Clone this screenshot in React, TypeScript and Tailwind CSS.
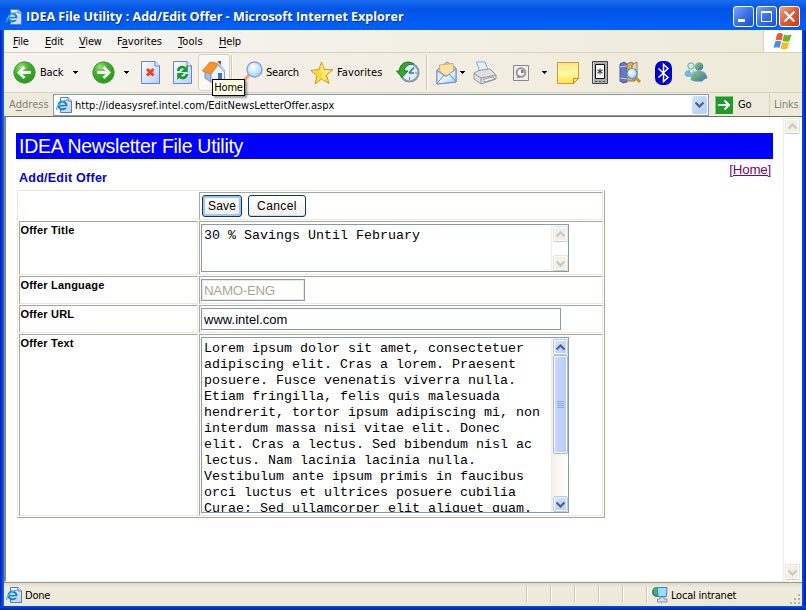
import type { ReactNode } from "react";

const offerText = `Lorem ipsum dolor sit amet, consectetuer
adipiscing elit. Cras a lorem. Praesent
posuere. Fusce venenatis viverra nulla.
Etiam fringilla, felis quis malesuada
hendrerit, tortor ipsum adipiscing mi, non
interdum massa nisi vitae elit. Donec
elit. Cras a lectus. Sed bibendum nisl ac
lectus. Nam lacinia lacinia nulla.
Vestibulum ante ipsum primis in faucibus
orci luctus et ultrices posuere cubilia
Curae; Sed ullamcorper elit aliquet quam.`;

function Gradients() {
  return (
    <svg className="absolute h-0 w-0" aria-hidden="true">
      <defs>
        <linearGradient id="page" x1="0" y1="0" x2="1" y2="1">
          <stop offset="0" stopColor="#fff" />
          <stop offset="1" stopColor="#b4cef8" />
        </linearGradient>
        <radialGradient id="green" cx=".35" cy=".25" r=".8">
          <stop offset="0" stopColor="#9be07c" />
          <stop offset=".45" stopColor="#3fae2a" />
          <stop offset="1" stopColor="#2a961c" />
        </radialGradient>
        <linearGradient id="note" x1="0" y1="0" x2="0" y2="1">
          <stop offset="0" stopColor="#ffe680" />
          <stop offset=".5" stopColor="#fff8a8" />
          <stop offset="1" stopColor="#ffe14d" />
        </linearGradient>
        <radialGradient id="lens" cx=".4" cy=".35" r=".7">
          <stop offset="0" stopColor="#fff" />
          <stop offset="1" stopColor="#9fd0fb" />
        </radialGradient>
        <linearGradient id="person" x1="0" y1="0" x2="1" y2="1">
          <stop offset="0" stopColor="#8fd08a" />
          <stop offset=".5" stopColor="#5fa08c" />
          <stop offset="1" stopColor="#4468c0" />
        </linearGradient>
        <linearGradient id="envelope" x1="0" y1="0" x2="1" y2="1">
          <stop offset="0" stopColor="#c9e6ff" />
          <stop offset=".5" stopColor="#e9f7ff" />
          <stop offset="1" stopColor="#8cc8f8" />
        </linearGradient>
      </defs>
    </svg>
  );
}

function IePage({ className = "" }: { className?: string }) {
  return (
    <svg width="16" height="16" viewBox="0 0 16 16" className={`shrink-0 ${className}`}>
      <path d="M4.500 .5H12L15.500 4V15.500H4.500Z" fill="url(#page)" stroke="#5d79b8" />
      <path d="M12 .5V4H15.500" fill="#dbe8ff" stroke="#5d79b8" />
      <circle cx="6.500" cy="8.500" r="3.900" fill="#c8ecff" stroke="#1b7fd6" strokeWidth="2.200" />
      <path d="M4 8.700H10.500" stroke="#1b7fd6" strokeWidth="1.700" />
      <path d="M8 10H12" stroke="#dbe8ff" strokeWidth="1.300" />
      <path d="M1 13C-.5 11 4 4 11.500 3" fill="none" stroke="#4fb2f0" strokeWidth="1.200" />
    </svg>
  );
}

function Chevron({ up = false, color }: { up?: boolean; color: string }) {
  return (
    <svg width="9" height="7" viewBox="0 0 9 7">
      <path d={up ? "M.5 5.500L4.500 1.500L8.500 5.500" : "M.5 1.500L4.500 5.500L8.500 1.500"} fill="none" stroke={color} strokeWidth="2.200" />
    </svg>
  );
}

function ScrollButton({ up = false, disabled = false }: { up?: boolean; disabled?: boolean }) {
  return (
    <div
      className={`flex h-[16px] w-[15px] shrink-0 items-center justify-center rounded-[2px] border shadow-[inset_0_0_0_1px_white] ${
        disabled ? "border-[#e6e4d8] border-b-[#cfccb8] bg-[#f0efe8]" : "border-[#b4c8f0] bg-linear-to-br from-[#d6e2ff] to-[#b5cbfb]"
      }`}
    >
      <Chevron up={up} color={disabled ? "#c9c7ba" : "#4d6185"} />
    </div>
  );
}

function DropArrow({ className = "" }: { className?: string }) {
  return (
    <svg width="5" height="3" viewBox="0 0 5 3" className={`shrink-0 ${className}`} shapeRendering="crispEdges">
      <path d="M0 0H5L2.500 3Z" fill="#000" />
    </svg>
  );
}

function Separator({ className = "" }: { className?: string }) {
  return <div className={`h-[35px] w-[2px] shrink-0 border-r border-l border-r-[#faf8f2] border-l-[#d2cdb6] ${className}`} />;
}

function RoundArrow({ back = false }: { back?: boolean }) {
  return (
    <svg width="23" height="23" viewBox="0 0 23 23" className="shrink-0">
      <circle cx="11.500" cy="11.500" r="10.700" fill="url(#green)" stroke="#4a9c3a" />
      <path
        d={back ? "M18 11.500H7M11.500 6L6 11.500L11.500 17" : "M5 11.500H16M11.500 6L17 11.500L11.500 17"}
        fill="none"
        stroke="#fff"
        strokeWidth="2.800"
      />
    </svg>
  );
}

function CaptionButton({ close = false, children }: { close?: boolean; children: ReactNode }) {
  return (
    <div
      className={`flex h-[21px] w-[21px] items-center justify-center rounded-[3px] border border-white ${
        close ? "bg-linear-to-br from-[#f0a080] via-[#e35a32] to-[#c83a10]" : "bg-linear-to-br from-[#7ba4f8] via-[#3a70ea] to-[#1c4fd0]"
      }`}
    >
      <svg width="19" height="19" viewBox="0 0 19 19">
        {children}
      </svg>
    </div>
  );
}

function TitleBar() {
  return (
    <header className="flex h-[30px] items-center bg-linear-to-b from-[#1a6df0] via-[#0054e3] via-30% to-[#0061fc] pt-[3px] pr-[6px] pl-[6px]">
      <IePage />
      <h1 className="ml-[4px] w-[400px] pt-px text-[12.500px] font-bold tracking-[0.010px] whitespace-nowrap text-white [font-family:'Open_Sans','Noto_Sans',sans-serif] [text-shadow:1px_1px_#0a318f]">
        IDEA File Utility : Add/Edit Offer - Microsoft Internet Explorer
      </h1>
      <div className="ml-auto flex gap-[2px]">
        <CaptionButton>
          <path d="M4 13.500H11" stroke="#fff" strokeWidth="3" />
        </CaptionButton>
        <CaptionButton>
          <path d="M4.500 4.500H14.500V14.500H4.500ZM4 5.500H15" fill="none" stroke="#fff" />
        </CaptionButton>
        <CaptionButton close>
          <path d="M4.500 4.500L14.500 14.500M14.500 4.500L4.500 14.500" stroke="#fff" strokeWidth="2.200" />
        </CaptionButton>
      </div>
    </header>
  );
}

function MenuItem({ before = "", letter, after, className }: { before?: string; letter: string; after: string; className: string }) {
  return (
    <span className={`pt-px whitespace-nowrap ${className}`}>
      {before}
      <span className="underline underline-offset-2">{letter}</span>
      {after}
    </span>
  );
}

function MenuBar() {
  return (
    <nav className="flex h-[23px] items-center border-b border-[#d8d2bd] bg-linear-to-r from-[#f7f5f2] to-[#eeead9] pl-[9px]">
      <MenuItem letter="F" after="ile" className="w-[32px]" />
      <MenuItem letter="E" after="dit" className="w-[34px]" />
      <MenuItem letter="V" after="iew" className="w-[38px]" />
      <MenuItem before="F" letter="a" after="vorites" className="w-[61px] tracking-[0.050px]" />
      <MenuItem letter="T" after="ools" className="w-[41px] tracking-[0.100px]" />
      <MenuItem letter="H" after="elp" className="w-[30px]" />
      <div className="ml-auto flex h-[22px] w-[39px] items-center justify-center border-l border-[#d8d2bd] bg-white">
        <svg width="20" height="19" viewBox="0 0 20 19">
          <path d="M4 2Q7 0 10 2L8.500 8.500Q5.500 7 2.500 8.500Z" fill="#ee5a2a" />
          <path d="M11 2.500Q14 4 18.500 2.500L16.500 9Q13 10.500 9.500 9Z" fill="#6fb52c" />
          <path d="M2.200 9.500Q5.500 8 8.200 9.500L6.500 16Q4 14.500.5 16Z" fill="#4a8de0" />
          <path d="M9.200 10Q12.500 11.500 16.200 10L14.500 16.500Q11 18.500 7.500 16.500Z" fill="#f5bd1f" />
        </svg>
      </div>
    </nav>
  );
}

function PageIcon({ children, className = "" }: { children: ReactNode; className?: string }) {
  return (
    <svg width="19" height="23" viewBox="0 0 19 23" className={`shrink-0 ${className}`}>
      <path d="M.5 .5H14L18.500 5V22.500H.5Z" fill="url(#page)" stroke="#6a84bd" />
      <path d="M14 .5V5H18.500" fill="#dce8ff" stroke="#6a84bd" />
      {children}
    </svg>
  );
}

function ToolBar() {
  return (
    <div className="flex h-[40px] items-center border-b border-[#d8d2bd] bg-linear-to-r from-[#f6f2ee] to-[#eeead8] pl-[9px]">
      <RoundArrow back />
      <span className="ml-[4px] w-[33px] pt-px">Back</span>
      <DropArrow className="mr-[14px]" />
      <RoundArrow />
      <DropArrow className="mr-[12px] ml-[9px]" />
      <PageIcon>
        <path d="M6 8L12.500 14.500M12.500 8L6 14.500" stroke="#f0401c" strokeWidth="3" />
      </PageIcon>
      <PageIcon className="ml-[13px]">
        <path d="M5 10C6 5.500 10.500 5 12 7.500M14 13C13 17.500 8.500 18 7 15.500" fill="none" stroke="#1b9a2a" strokeWidth="2.600" />
        <path d="M14.800 4V11H8ZM4.200 19V12H11Z" fill="#1b9a2a" />
      </PageIcon>
      <div className="relative ml-[6px] flex h-[37px] w-[32px] shrink-0 items-center justify-center rounded-[3px] border border-[#d5d2c4] bg-[#f9f8f4] pb-[2px]">
        <svg width="24" height="24" viewBox="0 0 24 24">
          <path d="M16 1H19V8H16Z" fill="#a63a2a" />
          <path d="M3 11L9 14V22L3 18Z" fill="#9fc0ea" stroke="#6d8fc4" />
          <path d="M9 14L16 5L22.500 12V19L9 23Z" fill="#f0f5ff" stroke="#7fa0d4" />
          <path d="M16 13H20V20L16 21.500Z" fill="#3f74c8" />
          <path d="M.5 11L8 2L16.500 3.500L8.500 14Z" fill="#f8942c" stroke="#e87f24" />
          <path d="M16 3L23 11.500" stroke="#b9c8e2" strokeWidth="2" />
        </svg>
        <div className="absolute top-[24px] left-[13px] z-10 flex h-[17px] w-[33px] items-center justify-center border border-black bg-[#ffffe1] pt-px shadow-[2px_2px_2px_rgba(0,0,0,0.4)]">
          Home
        </div>
      </div>
      <Separator className="ml-[1px]" />
      <svg width="20" height="24" viewBox="0 0 20 24" className="ml-[10px] shrink-0">
        <path d="M1 19.500L6 14" stroke="#f0a062" strokeWidth="3" />
        <circle cx="11.500" cy="8.500" r="7.500" fill="url(#lens)" stroke="#8aa4e0" strokeWidth="1.500" />
      </svg>
      <span className="ml-[3px] w-[44px] pt-px">Search</span>
      <svg width="24" height="24" viewBox="0 0 24 24" className="shrink-0">
        <path d="M11.500 1L14.500 8.500L23 8.700L16.500 14L19 22.500L11.500 18L5 23L7 14.500L.8 9.500L9 8.500Z" fill="#ffd93b" stroke="#d99a1a" />
        <path d="M11.500 4L12.500 11L19 10L13 14L14 19" fill="none" stroke="#fff6b0" strokeWidth="1.500" />
      </svg>
      <span className="ml-[3px] w-[59px] pt-px tracking-[0.100px]">Favorites</span>
      <svg width="24" height="23" viewBox="0 0 24 23" className="shrink-0">
        <circle cx="13.500" cy="11.500" r="9" fill="#d9f0fb" stroke="#8d9bab" strokeWidth="2.200" />
        <path d="M13 12L18 6.500M13 12H18" stroke="#4b6da0" strokeWidth="1.700" />
        <path d="M18 3C11-2 3 3 3.500 10H.5L6 16.500L12 10H8.500C8 6 12 3 18 3Z" fill="#35a52e" stroke="#207d1e" />
        <path d="M13.500 16V19M19 12H21" stroke="#7188a0" />
      </svg>
      <Separator className="ml-[6px]" />
      <svg width="21" height="24" viewBox="0 0 21 24" className="ml-[8px] shrink-0">
        <path d="M1 9L11 1L20 7V21L1 23Z" fill="#c4dcfa" stroke="#7288d0" />
        <path d="M3.500 4L17 2.500L18 11L10 15L4 11Z" fill="#ffe3a0" stroke="#e0a85c" />
        <path d="M1 9.500L10 15.500L20 8V21L1 23Z" fill="url(#envelope)" stroke="#7288d0" />
        <path d="M1 22.500L8 14M20 20.500L13 13" stroke="#7288d0" />
      </svg>
      <DropArrow className="ml-[3px]" />
      <svg width="24" height="24" viewBox="0 0 24 24" className="ml-[8px] shrink-0">
        <path d="M3.500 1H12L15 9L7 11Z" fill="#e4f2ff" stroke="#82a9dc" />
        <path d="M1 12L6 9.500L17 8L23 14V18L8 23L1 18Z" fill="#dfe0e5" stroke="#94969e" />
        <path d="M1 12.500L8 17L23 14M8 17V23" fill="none" stroke="#94969e" />
        <path d="M10 18.500L20 16L22 18L12 21Z" fill="#f6f6f6" stroke="#777" strokeWidth=".7" />
      </svg>
      <svg width="16" height="16" viewBox="0 0 16 16" className="ml-[16px] shrink-0">
        <path d="M.5 .5H15.500V15.500H.5Z" fill="#eee" stroke="#888" />
        <circle cx="8" cy="7.500" r="4.300" fill="#f8f8f8" stroke="#999" strokeWidth="2" />
        <path d="M8 5H10.500V8H8ZM5 11L3.500 13L8 12Z" fill="#777" />
      </svg>
      <DropArrow className="ml-[13px]" />
      <svg width="22" height="22" viewBox="0 0 22 22" className="ml-[10px] shrink-0">
        <path d="M.5 .5H21.500V16.500L16.500 21.500H.5Z" fill="url(#note)" stroke="#d59a28" />
        <path d="M16.500 21.500V16.500H21.500Z" fill="#ffe06c" stroke="#d08a18" />
      </svg>
      <svg width="16" height="23" viewBox="0 0 16 23" className="ml-[13px] shrink-0">
        <path d="M.5 .5H15.500V22.500H.5Z" fill="#aaa" stroke="#444" />
        <path d="M3.500 3.500H12.500V17.500H3.500Z" fill="#fff" stroke="#111" />
        <path d="M8 7.500V13.500M5.300 9L10.700 12M10.700 9L5.300 12" stroke="#222" />
        <path d="M3 20.500H13" stroke="#555" strokeDasharray="2 2" />
        <path d="M1.500 22V1.500" stroke="#ddd" />
      </svg>
      <svg width="22" height="23" viewBox="0 0 22 23" className="ml-[11px] shrink-0">
        <path d="M1 3L5 1L8 3V21L4 22L1 20Z" fill="#6878c4" stroke="#485599" />
        <path d="M8 3L12 1L16 3V20H8Z" fill="#d9b261" stroke="#8d7748" />
        <path d="M13 4L18 1V18H13Z" fill="#ecd79b" stroke="#927e52" />
        <path d="M1 6L8 5M1 17L8 18" stroke="#bac5f2" />
        <path d="M16 16L21 21" stroke="#c89034" strokeWidth="3" />
        <circle cx="13" cy="12.500" r="5" fill="url(#lens)" stroke="#5a91d4" strokeWidth="1.200" />
      </svg>
      <svg width="17" height="24" viewBox="0 0 17 24" className="ml-[14px] shrink-0">
        <rect width="17" height="24" rx="7" fill="#0000c8" />
        <path d="M3.500 7.500L13 16.500L8.500 20.500V3.500L13 7.500L3.500 16.500" fill="none" stroke="#fff" strokeWidth="1.500" />
      </svg>
      <svg width="24" height="23" viewBox="0 0 24 23" className="ml-[12px] shrink-0">
        <circle cx="7" cy="5" r="3.200" fill="#d5eee5" stroke="#68a99a" />
        <path d="M.5 13Q1 9 5 9H10L9 16H4L1 15Z" fill="#76b9d8" />
        <path d="M6 9H9L7.500 13Z" fill="#fff" />
        <circle cx="15" cy="5.500" r="4.300" fill="url(#person)" />
        <path d="M6.500 19Q8 11 12 10H18Q22 11 23.500 17L20 18.500L18 20.500H11Z" fill="url(#person)" />
      </svg>
    </div>
  );
}

function AddressBar() {
  return (
    <div className="flex h-[23px] items-center bg-[#eeebdc]">
      <span className="w-[49px] pt-px pl-[5px] tracking-[0.040px] text-[#84826f]">
        A<span className="underline underline-offset-2">d</span>dress
      </span>
      <div className="flex h-[22px] w-[657px] items-center border border-[#7f9db9] bg-white pr-[1px] pl-[2px]">
        <IePage />
        <span className="ml-[3px] w-[300px] pt-[2px] tracking-[0.020px] whitespace-nowrap">http://ideasysref.intel.com/EditNewsLetterOffer.aspx</span>
        <div className="ml-auto flex h-[18px] w-[15px] items-center justify-center rounded-[2px] bg-linear-to-br from-[#d6e2ff] to-[#b5cbfb]">
          <Chevron color="#4d6185" />
        </div>
      </div>
      <svg width="18" height="18" viewBox="0 0 18 18" className="ml-[6px] shrink-0">
        <rect width="18" height="18" rx="1" fill="#219a2c" />
        <path d="M.5 17V.5H17" fill="none" stroke="#83c883" />
        <path d="M3 9H14M9.500 4.500L14 9L9.500 13.500" fill="none" stroke="#fff" strokeWidth="2" />
      </svg>
      <span className="ml-[5px] w-[31px] pt-px">Go</span>
      <div className="ml-auto flex h-[21px] w-[33px] items-center border-l border-[#d8d2bd] pt-px pl-[4px] text-[#84826f]">Links</div>
    </div>
  );
}

function FieldCell({ children }: { children: ReactNode }) {
  return <div className="flex border border-t-[#aca899] border-r-[#ece9d8] border-b-[#ece9d8] border-l-[#aca899] pt-[2px] pl-px">{children}</div>;
}

function LabelCell({ children }: { children: ReactNode }) {
  return (
    <div className="border border-t-[#aca899] border-r-[#ece9d8] border-b-[#ece9d8] border-l-[#aca899] pt-[2px] pl-[0.500px] text-[11px] leading-[13px] font-bold tracking-[0.200px]">
      {children}
    </div>
  );
}

function OfferForm() {
  return (
    <div className="ml-[11px] grid h-[328px] w-[588px] grid-cols-[179px_404px] grid-rows-[28px_54px_28px_28px_182px] gap-px border border-t-[#ece9d8] border-r-[#aca899] border-b-[#aca899] border-l-[#ece9d8] p-px">
      <div />
      <FieldCell>
        <div className="ml-px flex gap-[6px] text-[12px] leading-[18px] tracking-[0.200px]">
          <button className="h-[22px] w-[40px] rounded-[3px] border border-[#003c74] bg-linear-to-b from-white to-[#f0efe8] pb-px shadow-[inset_0_0_0_2px_#a6c4f2]">
            Save
          </button>
          <button className="h-[22px] w-[58px] rounded-[3px] border border-[#003c74] bg-linear-to-b from-white to-[#f0efe8] pb-px tracking-[0.400px] shadow-[inset_0_-1px_#ddd9cc]">
            Cancel
          </button>
        </div>
      </FieldCell>

      <LabelCell>Offer Title</LabelCell>
      <FieldCell>
        <div className="flex h-[48px] w-[368px] border border-[#7f9db9] bg-white">
          <pre className="flex-1 pt-[3px] pl-[2px] text-[13.333px] leading-[16px] [font-family:'Liberation_Mono','Courier_New',monospace]">30 % Savings Until February</pre>
          <div className="flex w-[17px] flex-col items-center justify-between border-l border-[#eeede5] pt-px">
            <ScrollButton up disabled />
            <ScrollButton disabled />
          </div>
        </div>
      </FieldCell>

      <LabelCell>Offer Language</LabelCell>
      <FieldCell>
        <div className="flex h-[22px] w-[104px] items-center border border-[#7f9db9] bg-white pt-px pl-[2px] text-[13.333px] tracking-[-0.300px] text-[#aca899] shadow-[inset_0_0_0_1px_#ece9d8]">
          NAMO-ENG
        </div>
      </FieldCell>

      <LabelCell>Offer URL</LabelCell>
      <FieldCell>
        <div className="flex h-[22px] w-[360px] items-center border border-[#7f9db9] bg-white pt-px pl-[2px] text-[13px] tracking-[0.030px]">
          www.intel.com
        </div>
      </FieldCell>

      <LabelCell>Offer Text</LabelCell>
      <FieldCell>
        <div className="flex h-[176px] w-[368px] border border-[#7f9db9] bg-white">
          <pre className="flex-1 overflow-hidden pt-[3px] pl-[2px] text-[13.333px] leading-[16px] [font-family:'Liberation_Mono','Courier_New',monospace]">
            {offerText}
          </pre>
          <div className="flex w-[17px] flex-col items-center border-l border-[#eeede5] bg-linear-to-r from-[#f3f1ec] to-[#fefefb] pt-px">
            <ScrollButton up />
            <div className="flex h-[99px] w-[15px] flex-col items-center justify-center gap-px rounded-[2px] border border-[#9db8ec] bg-linear-to-r from-[#c9d8fc] to-[#b7cbf8] shadow-[inset_0_0_0_1px_white]">
              <div className="h-px w-[7px] bg-[#8caae6]" />
              <div className="h-px w-[7px] bg-[#8caae6]" />
              <div className="h-px w-[7px] bg-[#8caae6]" />
              <div className="h-px w-[7px] bg-[#8caae6]" />
            </div>
            <div className="mt-auto">
              <ScrollButton />
            </div>
          </div>
        </div>
      </FieldCell>
    </div>
  );
}

function Page() {
  return (
    <main className="flex h-[466px] border-t border-b border-l-2 border-t-[#716f64] border-b-[#f1efe2] border-l-[#8a887c] bg-white tracking-normal [font-family:'Liberation_Sans',Arial,sans-serif]">
      <div className="w-[777px]">
        <div className="mt-[16px] ml-[10px] h-[26px] w-[757px] bg-[#0000ff] pl-[3px] text-[19.500px] leading-[27px] tracking-[-0.280px] text-white">
          IDEA Newsletter File Utility
        </div>
        <div className="flex h-[31px] w-[767px] justify-between pr-[2px] pl-[13px]">
          <h2 className="pt-[11px] text-[12.500px] leading-[16px] font-bold tracking-[0.250px] text-[#0000e8]">Add/Edit Offer</h2>
          <a className="pt-[3px] text-[13.333px] leading-[16px] tracking-[-0.200px] text-[#800080] underline">[Home]</a>
        </div>
        <OfferForm />
      </div>
      <div className="flex w-[17px] flex-col items-center justify-between border-l border-[#eeede5] py-px">
        <ScrollButton up disabled />
        <ScrollButton disabled />
      </div>
    </main>
  );
}

function StatusBar() {
  return (
    <footer className="flex h-[24px] items-center border-t border-[#9d9b8d] bg-linear-to-b from-[#dedacb] via-[#efecdf] via-20% to-[#ece9d8] pl-[2px]">
      <IePage />
      <span className="ml-[3px] w-[501px] pt-[3px]">Done</span>
      {[0, 1, 2, 3, 4, 5].map((n) => (
        <div key={n} className={`h-[17px] border-l border-[#cbc7b5] shadow-[inset_1px_0_white] ${n === 5 ? "w-[6px]" : "w-[24px]"}`} />
      ))}
      <svg width="16" height="17" viewBox="0 0 16 17" className="shrink-0">
        <circle cx="5" cy="6" r="5" fill="#2b69d4" />
        <path d="M2 2Q6 0 7 3L5 6L7 8L4 10L1 6Z" fill="#49b53c" />
        <path d="M5.500 1.500H15L14.500 10.500H6Z" fill="#8fe2ff" stroke="#5b79bc" />
        <path d="M8 11H12V13H15V16H5.500V13H8Z" fill="#d5dbe7" stroke="#7480a0" strokeWidth=".8" />
      </svg>
      <span className="ml-[3px] pt-[3px] whitespace-nowrap">Local intranet</span>
      <svg width="12" height="12" viewBox="0 0 12 12" className="mt-auto ml-auto" shapeRendering="crispEdges">
        <path d="M8 0H10V2H8ZM4 4H6V6H4ZM8 4H10V6H8ZM0 8H2V10H0ZM4 8H6V10H4ZM8 8H10V10H8Z" fill="#b8b4a2" />
      </svg>
    </footer>
  );
}

export default function App() {
  return (
    <div className="flex h-[610px] w-[806px] flex-col overflow-hidden bg-[#0054e3] text-[11px] leading-[14px] tracking-[-0.200px] text-black [font-family:'DejaVu_Sans_Condensed','DejaVu_Sans',sans-serif]">
      <Gradients />
      <TitleBar />
      <div className="flex h-[576px]">
        <div className="w-[4px] bg-linear-to-r from-[#0012a8] via-[#0045dd] to-[#1a6cf5]" />
        <div className="flex w-[798px] flex-col">
          <MenuBar />
          <ToolBar />
          <AddressBar />
          <Page />
          <StatusBar />
        </div>
        <div className="w-[4px] bg-linear-to-r from-[#0050ee] via-[#0038d0] to-[#001088]" />
      </div>
      <div className="h-[4px] bg-linear-to-b from-[#0054e3] to-[#001ea0]" />
    </div>
  );
}
